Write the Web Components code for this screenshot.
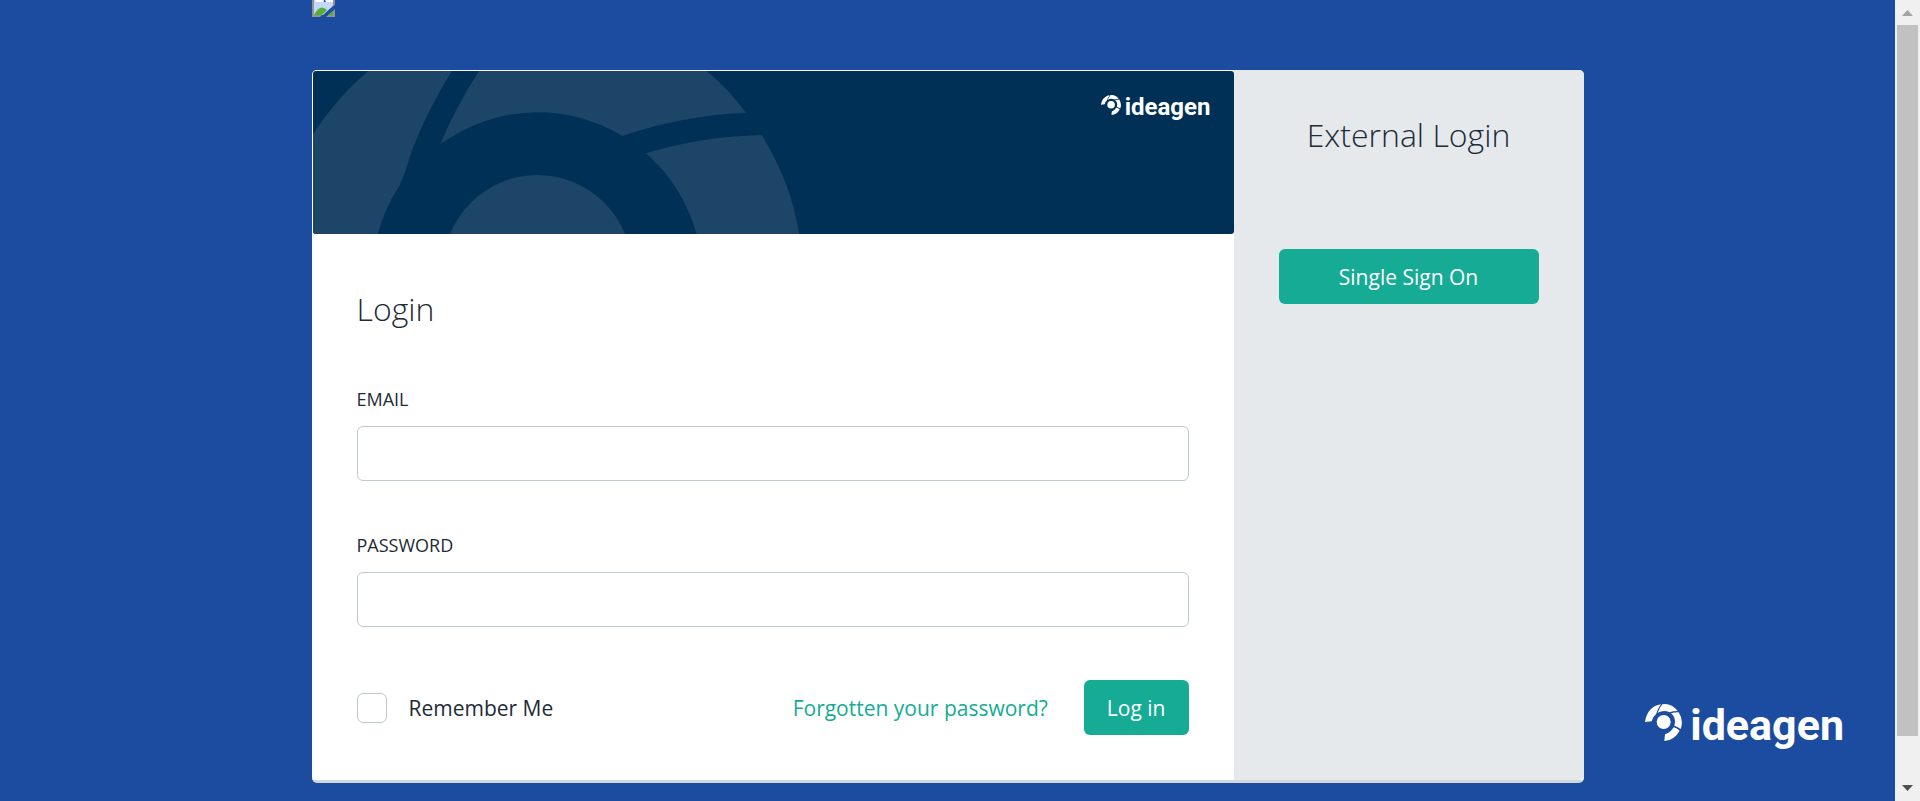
<!DOCTYPE html>
<html lang="en">
<head>
<meta charset="utf-8">
<meta name="viewport" content="width=device-width, initial-scale=1">
<title>Login</title>
<style>
html, body { margin: 0; }
body { background: #1c4c9f; color: #1d2b36; font-family: "Open Sans", "Noto Sans", sans-serif; font-size: 21px; line-height: 30px; }
</style>
</head>
<body>
<login-page></login-page>
<script>
const define = (name, html, setup) => customElements.define(name, class extends HTMLElement {
  constructor() {
    super();
    const t = document.createElement('template');
    t.innerHTML = '<style>*{box-sizing:border-box}</style>' + html;
    this.attachShadow({ mode: 'open' }).append(t.content.cloneNode(true));
  }
  connectedCallback() { if (setup) setup(this, this.shadowRoot); }
});

define('brand-logo', `
<style>
:host { display: flex; align-items: flex-start; gap: var(--logo-gap, 8px); color: #fff; font: 700 var(--logo-size, 43px)/1 Roboto, sans-serif; }
svg { width: var(--logo-icon, 37px); height: var(--logo-icon, 37px); flex: none; }
</style>
<svg viewBox="0 0 111 111" fill="#fff" aria-hidden="true">
<path d="M0 54C4 25 22 4 48 1Q36 17 33 31Q23 38 20 52Z"/>
<path d="M52 1Q78-4 98 21Q84 21 73 25Q58 17 38 26Q42 14 52 1Z"/>
<path d="M101 25Q117 49 107 75Q97 67 88 65Q95 43 78 28Q88 25 101 25Z"/>
<path d="M86 70Q96 73 104 80Q88 109 58 111L60 91Q76 86 86 70Z"/>
<circle cx="56" cy="54" r="21"/>
</svg>
<span>ideagen</span>`);

define('login-banner', `
<style>
:host { display: flex; justify-content: space-between; margin: 1px 0 0 1px; height: 163px; overflow: hidden; border-radius: 3px; background: #003055; }
svg { width: 540px; height: 163px; flex: none; }
brand-logo { --logo-size: 24px; --logo-icon: 20px; --logo-gap: 4px; margin: 24px 23px 0 0; }
</style>
<svg viewBox="38 213 1568 489" preserveAspectRatio="none" fill="#1c4567" aria-hidden="true">
<path d="M38 402Q105 295 198 213H441C380 318 350 385 320 468Q308 515 290 555Q246 625 226 702H38Z"/>
<path d="M520 213H1182Q1245 268 1295 338Q1105 347 936 408Q820 337 690 337Q540 337 408 432Q450 325 520 213Z"/>
<path d="M1341 405Q1425 545 1450 702H1152Q1110 555 1005 460Q1160 410 1341 405Z"/>
<ellipse cx="690" cy="808" rx="274" ry="283"/>
</svg>
<brand-logo></brand-logo>`);

define('text-field', `
<style>
:host { display: block; }
label { display: block; font-size: 18px; line-height: 24px; margin-bottom: 15px; }
input { display: block; width: 100%; height: 55px; padding: 0 16px; border: 1px solid #bfc9cf; border-radius: 6px; background: #fff; font: inherit; color: inherit; }
</style>
<label for="field"></label><input id="field">`, (host, root) => {
  root.querySelector('label').textContent = host.getAttribute('label');
  root.querySelector('input').type = host.getAttribute('type');
});

define('action-button', `
<style>
:host { display: block; }
button { display: block; width: 100%; height: 55px; padding: 0 23px; border: 0; border-radius: 6px; background: #15ab94; color: #fff; font: inherit; cursor: pointer; }
</style>
<button type="button"><slot></slot></button>`);

define('check-option', `
<style>
:host { display: flex; align-items: center; gap: 22px; }
input { appearance: none; margin: 0; width: 30px; height: 30px; border: 1px solid #bfc9cf; border-radius: 6px; background: #fff; }
input:checked { background: #15ab94; }
</style>
<input type="checkbox" id="check"><label for="check"><slot></slot></label>`);

define('login-form', `
<style>
:host { display: block; background: #fff; border-radius: 5px 0 0 5px; }
form { padding: 51px 45px 45px; }
h1 { margin: 0 0 54px; font-size: 32px; line-height: 48px; font-weight: 300; }
text-field { margin-bottom: 52px; }
.actions { display: flex; align-items: center; gap: 36px; }
text-field + .actions { margin-top: 53px; }
check-option { margin-right: auto; }
a { color: #15ab94; text-decoration: none; }
</style>
<login-banner></login-banner>
<form>
<h1>Login</h1>
<text-field label="EMAIL" type="email"></text-field>
<text-field label="PASSWORD" type="password"></text-field>
<div class="actions"><check-option>Remember Me</check-option><a href="#">Forgotten your password?</a><action-button>Log in</action-button></div>
</form>`);

define('external-login', `
<style>
:host { display: block; padding: 41px 45px; background: #e5e9ec; border-radius: 0 5px 5px 0; }
h2 { margin: 0 0 90px; font-size: 32px; line-height: 48px; font-weight: 300; text-align: center; }
</style>
<h2>External Login</h2>
<action-button>Single Sign On</action-button>`);

define('missing-image', `
<style>:host { display: block; height: 70px; } svg { display: block; width: 24px; height: 17px; }</style>
<svg viewBox="0 0 24 17" role="img" aria-label="Logo">
<path d="M0 0H2V15H10L8 17H0Z" fill="#91938f"/>
<path d="M2 0H12V2H21V6L11 15H2Z" fill="#c4d7f5"/>
<path d="M3 0H11V2H4ZM13 0H21V2H14Z" fill="#fff"/>
<path d="M2 15Q8 3 15 10L10 15Z" fill="#56ae37"/>
<path d="M21 0H23V5L21 6Z" fill="#91938f"/>
<path d="M14 17L23 9V17Z" fill="#91938f"/><path d="M16 15L21 11V15Z" fill="#56ae37"/>
</svg>`);

define('page-scrollbar', `
<style>
:host { display: flex; flex-direction: column; width: 25px; padding: 0 2px; background: #f0f0f0; }
svg { width: 21px; height: 25px; flex: none; }
.thumb { flex: 711; background: #c1c1c1; }
.rest { flex: 40; }
</style>
<svg viewBox="0 0 21 25" aria-hidden="true"><path d="M5 16L10.500 10L16 16Z" fill="#a3a3a3"/></svg>
<div class="thumb"></div><div class="rest"></div>
<svg viewBox="0 0 21 25" aria-hidden="true"><path d="M5 9L10.500 15L16 9Z" fill="#505050"/></svg>`);

define('login-page', `
<style>
:host { display: flex; min-height: 100vh; }
main { flex: 1; display: grid; grid-template-columns: 1fr minmax(0, 1272px) 1fr; }
.center { grid-column: 2; padding-bottom: 16px; }
.card { display: grid; grid-template-columns: minmax(0, 1fr) 350px; border-bottom: 3px solid #d1d7da; border-radius: 5px; background: #fff; }
brand-logo { grid-column: 3; align-self: end; justify-self: end; margin: 0 51px 54px 0; }
</style>
<main>
<div class="center"><missing-image></missing-image><div class="card"><login-form></login-form><external-login></external-login></div></div>
<brand-logo></brand-logo>
</main>
<page-scrollbar></page-scrollbar>`);
</script>
</body>
</html>
